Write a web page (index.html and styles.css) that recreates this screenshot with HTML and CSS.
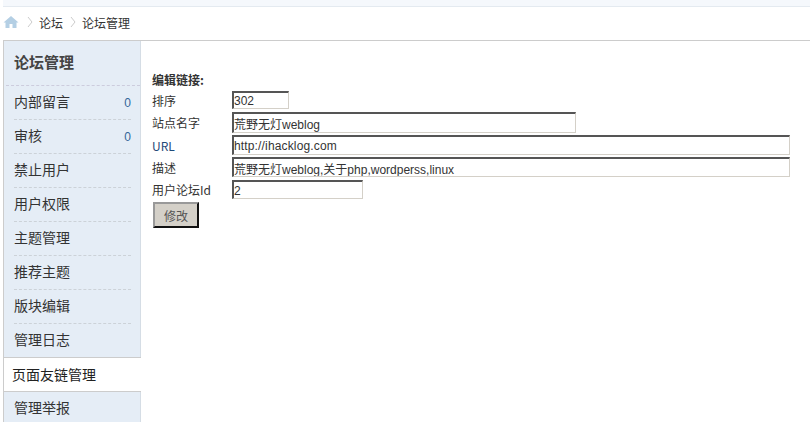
FILE: index.html
```html
<!DOCTYPE html>
<html lang="zh-CN">
<head>
  <meta charset="UTF-8" />
  <title>论坛管理</title>
  <link rel="stylesheet" href="styles.css">
</head>
<body>
  <div class="top-strip"></div>
  <div class="crumbs">
    <svg class="home-icon" width="16" height="14" viewBox="0 0 16 14">
      <path d="M8 1 L0.5 7.5 L2.5 7.5 L2.5 13 L6.5 13 L6.5 9 L9.5 9 L9.5 13 L13.5 13 L13.5 7.5 L15.5 7.5 Z" fill="#b4cfe4" />
    </svg>
    <svg class="sep" width="6" height="12" viewBox="0 0 6 12"><path d="M1 1 L5 6 L1 11" fill="none" stroke="#ccc" /></svg>
    <span>论坛</span>
    <svg class="sep" width="6" height="12" viewBox="0 0 6 12"><path d="M1 1 L5 6 L1 11" fill="none" stroke="#ccc" /></svg>
    <span>论坛管理</span>
  </div>
  <div class="main">
    <div class="side">
      <h2 class="side-title">论坛管理</h2>
      <ul class="side-list">
        <li><span>内部留言</span><em>0</em></li>
        <li><span>审核</span><em>0</em></li>
        <li>禁止用户</li>
        <li>用户权限</li>
        <li>主题管理</li>
        <li>推荐主题</li>
        <li>版块编辑</li>
        <li class="last">管理日志</li>
        <li class="selected">页面友链管理</li>
        <li class="after">管理举报</li>
      </ul>
    </div>
    <form class="content">
      <div class="form-title">编辑链接:</div>
      <div class="row r1"><label>排序</label><input class="w-s" value="302"></div>
      <div class="row r2"><label>站点名字</label><input class="w-m" value="荒野无灯weblog"></div>
      <div class="row r3"><label class="blue">URL</label><input class="w-l url-input" value="http://ihacklog.com"></div>
      <div class="row r4"><label>描述</label><input class="w-l" value="荒野无灯weblog,关于php,wordperss,linux"></div>
      <div class="row r5"><label>用户论坛Id</label><input class="w-id" value="2"></div>
      <button type="button" class="save-btn">修改</button>
    </form>
  </div>
</body>
</html>
```

FILE: styles.css
```css
html, body {
  margin: 0;
  padding: 0;
  height: 422px;
  overflow: hidden;
  background: #fff;
  font-family: "Noto Sans CJK SC", "Liberation Sans", sans-serif;
  font-size: 12px;
  color: #333;
}

.top-strip {
  height: 6px;
  margin-left: 3px;
  background: #f5f8fc;
  border-bottom: 1px solid #e4eaf0;
}

.crumbs {
  height: 30px;
  padding: 0 0 3px 3px;
  display: flex;
  align-items: center;
  font-size: 12px;
  color: #333;
}

.home-icon { margin-right: 6px; }
.sep { margin-right: 6px; margin-left: 2px; }
.crumbs span { margin-right: 5px; }

.main {
  display: flex;
  height: 382px;
  margin-left: 3px;
  border-top: 1px solid #ccc;
  overflow: hidden;
}

.side {
  width: 136px;
  flex: none;
  background: #e5edf6;
  border-left: 1px solid #ccc;
  border-right: 1px solid #d5dde5;
  margin-right: -1px;
}

.side-title {
  margin: 0 0 0 2px;
  height: 44px;
  line-height: 41px;
  padding-left: 8px;
  font-size: 15px;
  font-weight: bold;
  color: #444;
  border-bottom: 1px dashed #ccd;
}

.side-list {
  list-style: none;
  margin: 0;
  padding: 0;
}

.side-list li {
  display: flex;
  justify-content: space-between;
  align-items: center;
  height: 29px;
  padding-bottom: 4px;
  margin: 0 9px 0 10px;
  border-bottom: 1px dashed #ccd2d8;
  font-size: 14px;
  color: #333;
}

.side-list li.last {
  height: 29px;
  border-bottom: none;
}

.side-list li.selected {
  height: 31px;
  padding: 0 0 2px 8px;
  margin: 0 -1px 0 0;
  background: #fff;
  border-top: 1px solid #ccc;
  border-bottom: 1px solid #ccc;
  color: #222;
}

.side-list li.after { border-bottom: none; }

.side-list em {
  margin-top: 5px;
  font-style: normal;
  font-size: 12px;
  color: #369;
  font-family: "Liberation Sans", sans-serif;
}

.content {
  flex: 1;
  padding: 30px 0 0 12px;
}

.form-title {
  height: 18px;
  line-height: 18px;
  font-size: 12px;
  font-weight: bold;
  color: #333;
}

.row {
  display: flex;
  align-items: center;
}

.row label {
  width: 80px;
  flex: none;
  font-size: 12px;
}

.row label.blue { color: #1f4a78; }

.r1 { height: 22px; }
.r2 { height: 23px; }
.r3 { height: 22px; }
.r4 { height: 22px; }
.r5 { height: 23px; }

.row input {
  box-sizing: border-box;
  margin: 0;
  padding: 1px 0 0;
  font-family: "Liberation Sans", "Noto Sans CJK SC", sans-serif;
  font-size: 12px;
  color: #333;
  background: #fff;
  border-style: solid;
  border-width: 2px 1px 1px 2px;
  border-color: #555 #d4d0c8 #d4d0c8 #555;
  outline: none;
}

.row .url-input { letter-spacing: 0.15px; }

.w-s { width: 57px; height: 18px; }
.w-m { width: 344px; height: 21px; }
.w-l { width: 558px; height: 20px; }
.w-id { width: 131px; height: 19px; }

.save-btn {
  box-sizing: border-box;
  display: block;
  width: 46px;
  height: 26px;
  margin: 1px 0 0 1px;
  padding: 0;
  font-family: "Noto Sans CJK SC", sans-serif;
  font-size: 12px;
  color: #555;
  background: #d4d0c8;
  border: 2px solid #111;
  border-top-color: #999;
  border-left-color: #999;
}
```
